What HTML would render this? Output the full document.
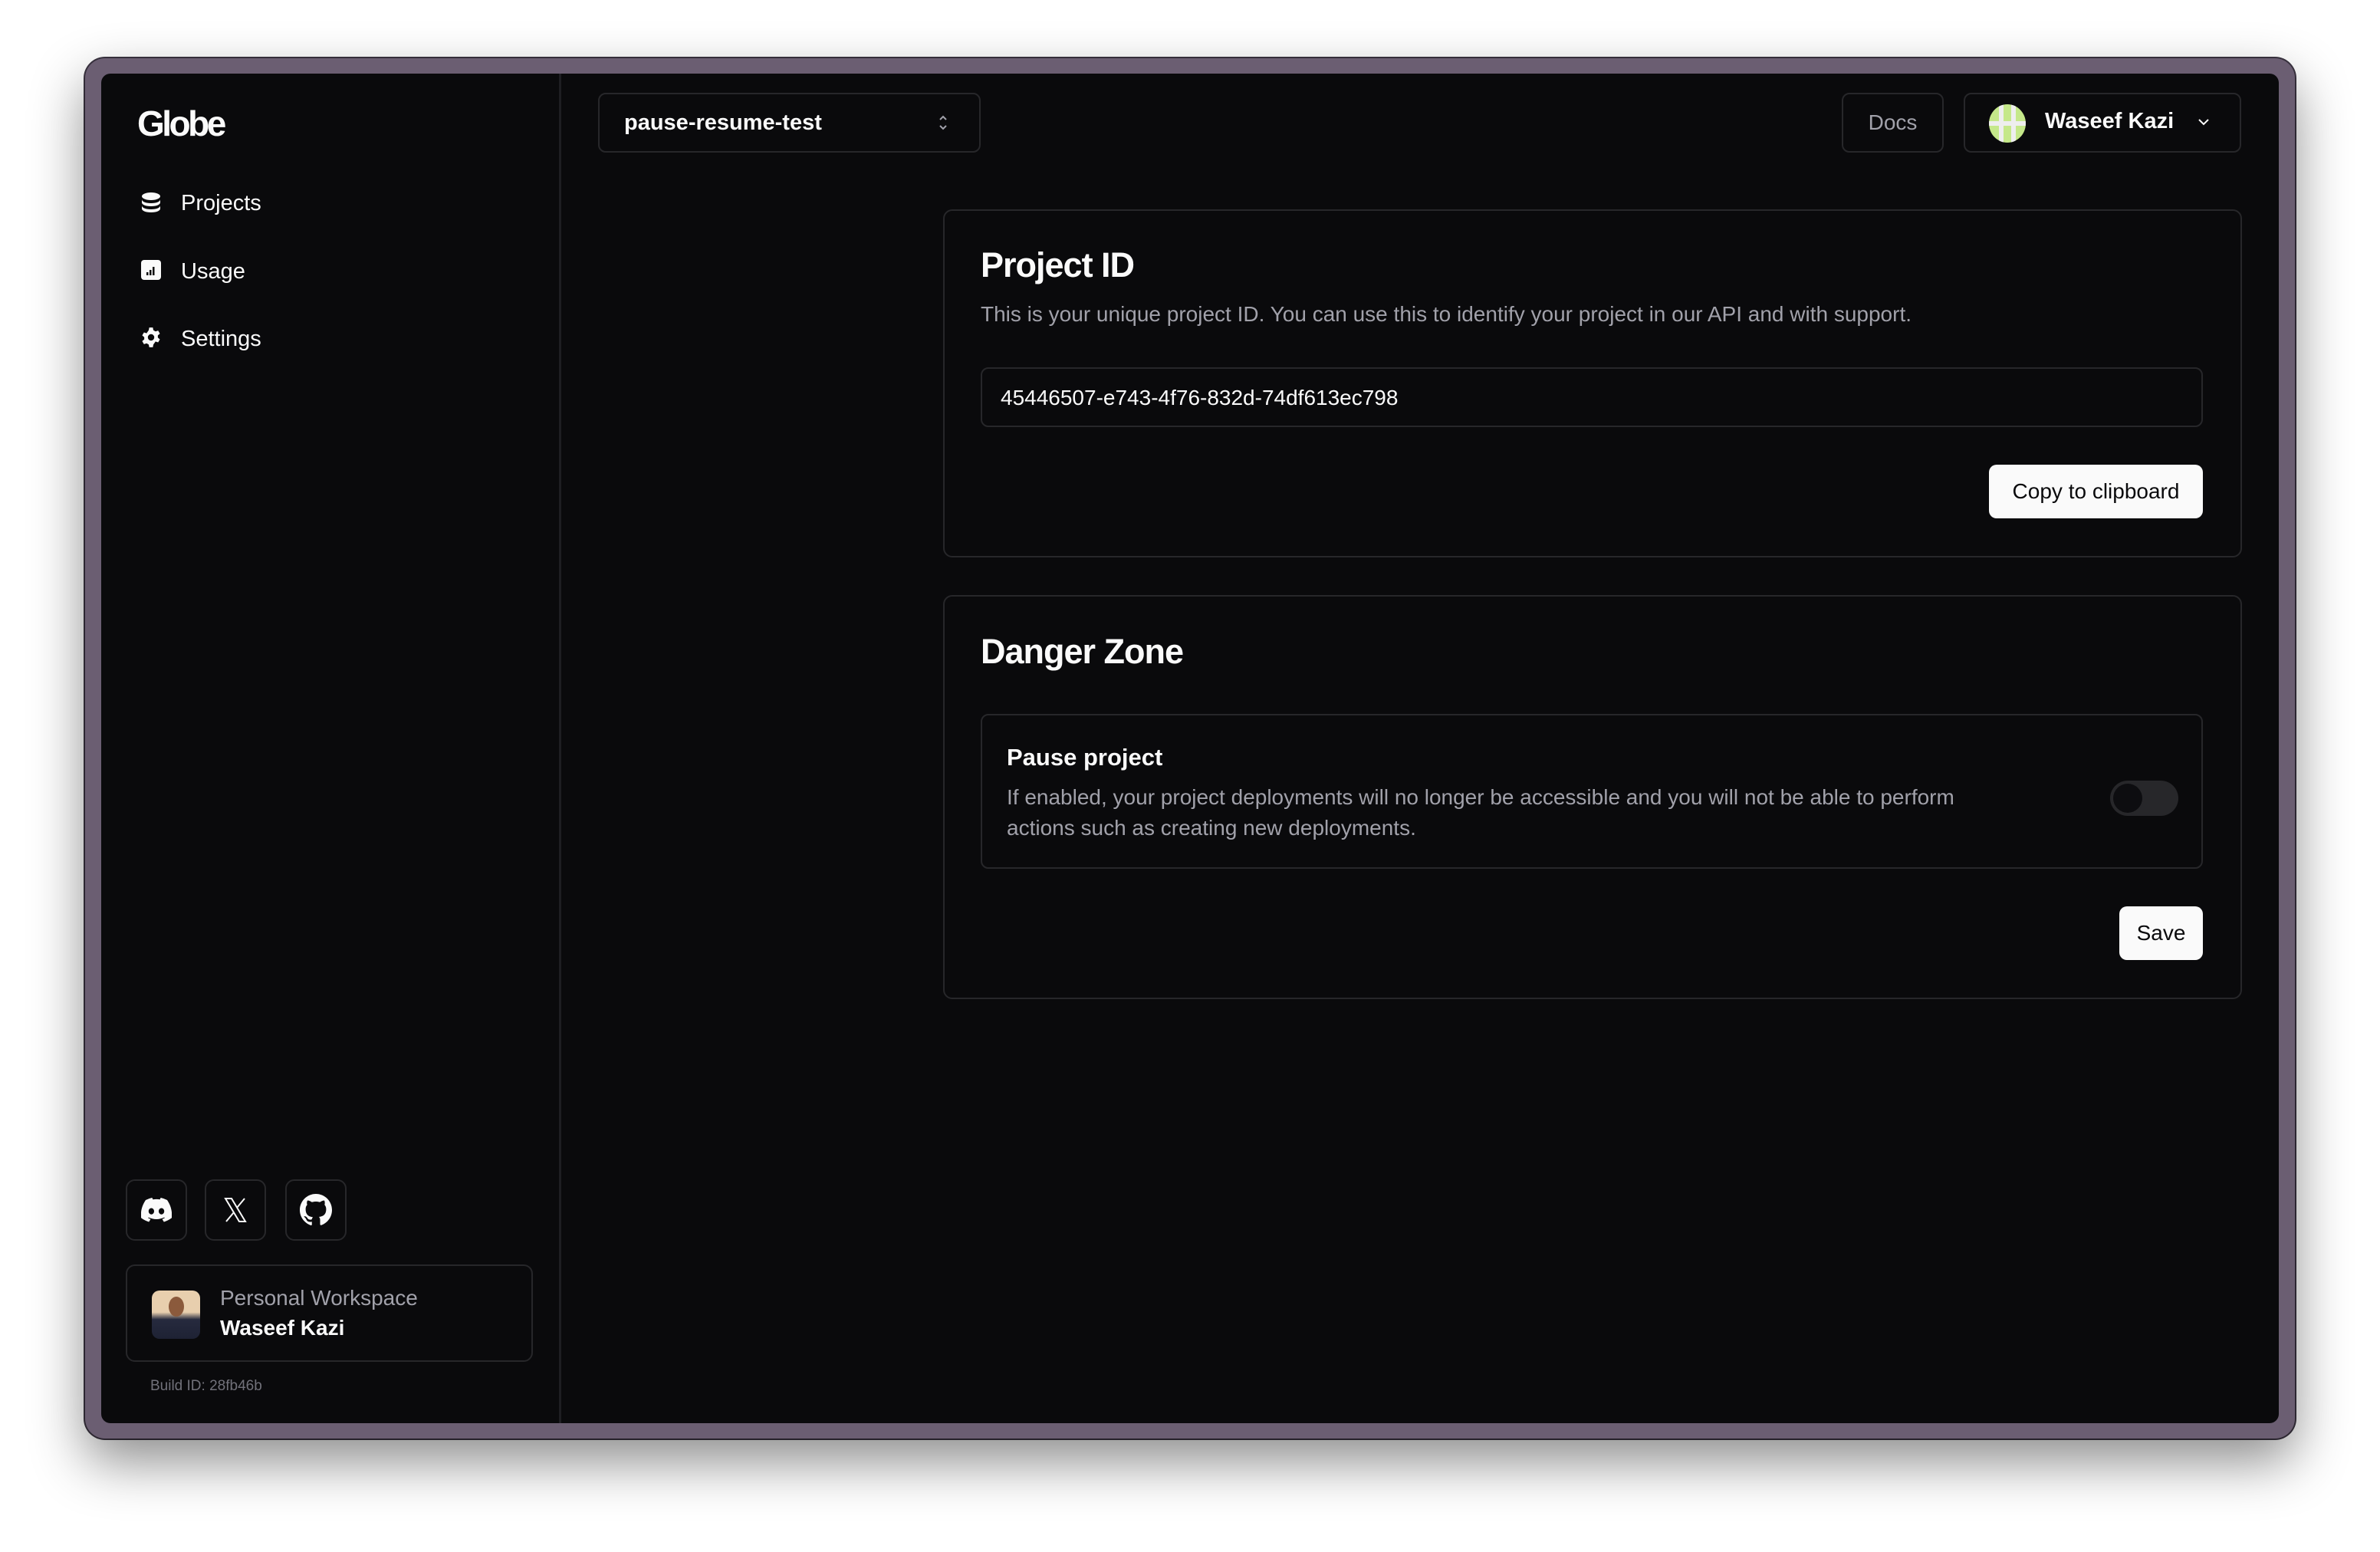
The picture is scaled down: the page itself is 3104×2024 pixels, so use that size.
<!DOCTYPE html>
<html><head><meta charset="utf-8"><style>
*{box-sizing:border-box;margin:0;padding:0}
body{width:3104px;height:2024px;background:#fff;font-family:"Liberation Sans",sans-serif;position:relative;overflow:hidden;color:#fafafa}
.frame{position:absolute;left:111px;top:76px;width:2882px;height:1800px;background:#6b5e72;border-radius:26px;box-shadow:0 30px 70px rgba(0,0,0,.45),0 0 0 2px #3a3340}
.inner{position:absolute;left:132px;top:96px;width:2840px;height:1760px;background:#0a0a0c;border-radius:12px;overflow:hidden}
.a{position:absolute}
.b{border:2px solid #27272a;border-radius:10px}
.nav{position:absolute;left:236px;font-size:29px;color:#fafafa}
.btnw{position:absolute;background:#fafafa;color:#0a0a0c;border-radius:10px;font-size:28px;display:flex;align-items:center;justify-content:center}
.gray{color:#a1a1aa}
</style></head><body>
<div class="frame"></div>
<div class="inner"></div>
<div class="a" style="left:729px;top:96px;width:3px;height:1760px;background:#1e1e22"></div>

<div class="a" style="left:179px;top:134px;font-size:46px;font-weight:bold;letter-spacing:-3.5px">Globe</div>

<svg class="a" style="left:184px;top:250px" width="26" height="30" viewBox="0 0 26 30"><ellipse cx="13" cy="6" rx="12" ry="5" fill="#fafafa"/><path d="M1 10c0 3 5 5 12 5s12-2 12-5v4c0 3-5 5-12 5S1 17 1 14z" fill="#fafafa"/><path d="M1 18c0 3 5 5 12 5s12-2 12-5v4c0 3-5 5-12 5S1 25 1 22z" fill="#fafafa"/></svg>
<div class="nav" style="top:249px">Projects</div>
<svg class="a" style="left:184px;top:339px" width="26" height="26" viewBox="0 0 26 26"><rect width="26" height="26" rx="4" fill="#fafafa"/><rect x="7" y="16" width="2.5" height="4" fill="#0a0a0c"/><rect x="11" y="13" width="2.5" height="7" fill="#0a0a0c"/><rect x="15" y="9" width="2.5" height="11" fill="#0a0a0c"/></svg>
<div class="nav" style="top:338px">Usage</div>
<svg class="a" style="left:183px;top:426px" width="28" height="28" viewBox="0 0 24 24"><path fill="#fafafa" d="M10 1h4l.6 3 2.4 1.4 2.9-1 2 3.4-2.3 2v2.4l2.3 2-2 3.4-2.9-1L14.6 20 14 23h-4l-.6-3-2.4-1.4-2.9 1-2-3.4 2.3-2v-2.4L2.1 9.8l2-3.4 2.9 1L9.4 4z"/><circle cx="12" cy="12" r="3.6" fill="#0a0a0c"/></svg>
<div class="nav" style="top:426px">Settings</div>

<div class="a b" style="left:164px;top:1538px;width:80px;height:80px;border-radius:12px"></div>
<svg class="a" style="left:184px;top:1562px" width="40" height="32" viewBox="0 0 40 32"><path fill="#fafafa" d="M34 3A33 33 0 0 0 25.6 0l-1 2.2a30 30 0 0 0-9.2 0L14.4 0A33 33 0 0 0 6 3C.7 11-.8 18.7 0 26.3A33 33 0 0 0 10.2 31.5l2.2-3.5a21 21 0 0 1-3.4-1.7l.8-.7a24 24 0 0 0 20.4 0l.8.7a21 21 0 0 1-3.4 1.7l2.2 3.5A33 33 0 0 0 40 26.3C40.9 17.5 38.6 9.9 34 3zM13.4 21.7c-2 0-3.6-1.8-3.6-4.1s1.6-4.1 3.6-4.1 3.6 1.9 3.6 4.1-1.6 4.1-3.6 4.1zm13.2 0c-2 0-3.6-1.8-3.6-4.1s1.6-4.1 3.6-4.1 3.6 1.9 3.6 4.1-1.6 4.1-3.6 4.1z"/></svg>
<div class="a b" style="left:267px;top:1538px;width:80px;height:80px;border-radius:12px"></div>
<svg class="a" style="left:292px;top:1562px" width="30" height="32" viewBox="0 0 30 32"><path d="M2 1h8l18 30h-8z" fill="none" stroke="#fafafa" stroke-width="2"/><path d="M27 1L17 13M3 31l10-12" stroke="#fafafa" stroke-width="2"/></svg>
<div class="a b" style="left:372px;top:1538px;width:80px;height:80px;border-radius:12px"></div>
<svg class="a" style="left:391px;top:1557px" width="42" height="42" viewBox="0 0 16 16"><path fill="#fafafa" d="M8 0C3.6 0 0 3.6 0 8c0 3.5 2.300 6.5 5.5 7.6.4.1.5-.2.5-.4v-1.4c-2.2.5-2.7-1-2.7-1-.4-.9-.9-1.200-.9-1.200-.7-.5.1-.5.1-.5.8.1 1.2.8 1.2.8.7 1.2 1.9.9 2.3.7.1-.5.3-.9.5-1.1-1.8-.2-3.6-.9-3.6-4 0-.9.3-1.6.8-2.1-.1-.2-.4-1 .1-2.1 0 0 .7-.2 2.2.8.6-.2 1.3-.3 2-.3s1.4.1 2 .3c1.5-1 2.2-.8 2.2-.8.4 1.1.2 1.9.1 2.1.5.6.8 1.3.8 2.1 0 3.1-1.9 3.7-3.6 3.9.3.3.6.8.6 1.5v2.2c0 .2.1.5.6.4C13.7 14.5 16 11.5 16 8c0-4.4-3.6-8-8-8z"/></svg>

<div class="a b" style="left:164px;top:1649px;width:531px;height:127px;border-radius:12px"></div>
<div class="a" style="left:198px;top:1683px;width:63px;height:63px;border-radius:10px;background:linear-gradient(#e8cfae 0,#e8cfae 45%,#262a3e 60%,#1e2234 100%);overflow:hidden"><div style="position:absolute;left:22px;top:8px;width:20px;height:26px;border-radius:50%;background:#8b5a3c"></div></div>
<div class="a gray" style="left:287px;top:1677px;font-size:28px">Personal Workspace</div>
<div class="a" style="left:287px;top:1716px;font-size:28px;font-weight:bold">Waseef Kazi</div>
<div class="a" style="left:196px;top:1797px;font-size:19px;color:#71717a">Build ID: 28fb46b</div>

<div class="a b" style="left:780px;top:121px;width:499px;height:78px"></div>
<div class="a" style="left:814px;top:144px;font-size:29px;font-weight:600">pause-resume-test</div>
<svg class="a" style="left:1220px;top:146px" width="20" height="28" viewBox="0 0 20 28"><path d="M6 10l4-4 4 4M6 18l4 4 4-4" fill="none" stroke="#a1a1aa" stroke-width="2"/></svg>

<div class="a b" style="left:2402px;top:121px;width:133px;height:78px;display:flex;align-items:center;justify-content:center;font-size:28px;color:#a1a1aa">Docs</div>
<div class="a b" style="left:2561px;top:121px;width:362px;height:78px"></div>
<div class="a" style="left:2594px;top:136px;width:48px;height:50px;border-radius:50%;background:#c5e88a;overflow:hidden"><div style="position:absolute;left:13px;top:0;width:6px;height:50px;background:#eee"></div><div style="position:absolute;left:29px;top:0;width:6px;height:50px;background:#eee"></div><div style="position:absolute;left:0;top:22px;width:48px;height:6px;background:#eee"></div></div>
<div class="a" style="left:2667px;top:142px;font-size:29px;font-weight:bold">Waseef Kazi</div>
<svg class="a" style="left:2864px;top:152px" width="20" height="14" viewBox="0 0 20 14"><path d="M4 4l6 6 6-6" fill="none" stroke="#fafafa" stroke-width="2"/></svg>

<div class="a b" style="left:1230px;top:273px;width:1694px;height:454px;border-radius:12px"></div>
<div class="a" style="left:1279px;top:320px;font-size:45px;font-weight:bold;letter-spacing:-1px">Project ID</div>
<div class="a gray" style="left:1279px;top:394px;font-size:28px">This is your unique project ID. You can use this to identify your project in our API and with support.</div>
<div class="a b" style="left:1279px;top:479px;width:1594px;height:78px"></div>
<div class="a" style="left:1305px;top:503px;font-size:28px">45446507-e743-4f76-832d-74df613ec798</div>
<div class="btnw" style="left:2594px;top:606px;width:279px;height:70px">Copy to clipboard</div>

<div class="a b" style="left:1230px;top:776px;width:1694px;height:527px;border-radius:12px"></div>
<div class="a" style="left:1279px;top:824px;font-size:45px;font-weight:bold;letter-spacing:-1px">Danger Zone</div>
<div class="a b" style="left:1279px;top:931px;width:1594px;height:202px"></div>
<div class="a" style="left:1313px;top:970px;font-size:31px;font-weight:bold">Pause project</div>
<div class="a gray" style="left:1313px;top:1020px;font-size:28px;line-height:40px">If enabled, your project deployments will no longer be accessible and you will not be able to perform<br>actions such as creating new deployments.</div>
<div class="a" style="left:2752px;top:1018px;width:89px;height:46px;border-radius:23px;background:#27272a"><div style="position:absolute;left:4px;top:4px;width:38px;height:38px;border-radius:50%;background:#0d0d10"></div></div>
<div class="btnw" style="left:2764px;top:1182px;width:109px;height:70px">Save</div>
</body></html>
